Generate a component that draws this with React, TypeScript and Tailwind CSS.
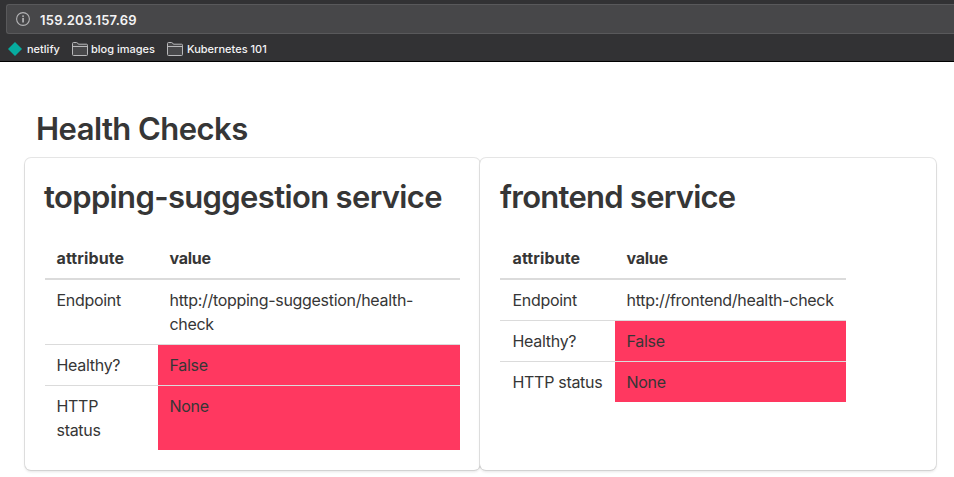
import React from "react";

type Service = {
  name: string;
  cardClass: string;
  titleClass: string;
  tableClass: string;
  firstCol: string;
  cellClass: string;
  rows: { attribute: string; value: string; bad?: boolean; valueClass?: string }[];
};

const services: Service[] = [
  {
    name: "topping-suggestion service",
    cardClass: "w-[455px]",
    titleClass: "tracking-[-0.65px] -ml-px",
    tableClass: "w-[415px]",
    firstCol: "w-[113px]",
    cellClass: "pl-[11.5px] pr-4",
    rows: [
      { attribute: "Endpoint", value: "http://topping-suggestion/health-check" },
      { attribute: "Healthy?", value: "False", bad: true },
      { attribute: "HTTP status", value: "None", bad: true },
    ],
  },
  {
    name: "frontend service",
    cardClass: "w-[456px]",
    titleClass: "tracking-[-0.75px]",
    tableClass: "w-[346px]",
    firstCol: "w-[115px]",
    cellClass: "pl-[12.5px] pr-2",
    rows: [
      { attribute: "Endpoint", value: "http://frontend/health-check", valueClass: "whitespace-nowrap" },
      { attribute: "Healthy?", value: "False", bad: true },
      { attribute: "HTTP status", value: "None", bad: true },
    ],
  },
];

function InfoIcon() {
  return (
    <svg width="14" height="14" viewBox="0 0 14 14" fill="none" className="shrink-0">
      <circle cx="7" cy="7" r="6.4" stroke="#b4b4b6" strokeWidth="1.1" />
      <rect x="6.3" y="3.4" width="1.5" height="1.5" fill="#c4c4c6" />
      <rect x="6.3" y="5.9" width="1.5" height="4.6" fill="#c4c4c6" />
    </svg>
  );
}

function FolderIcon() {
  return (
    <svg width="16" height="14" viewBox="0 0 16 14" fill="none" className="shrink-0">
      <path
        d="M0.5 12.6V1.5Q0.5 0.5 1.5 0.5H4.6Q5.3 0.5 5.6 1L6.4 2.2H14.5Q15.5 2.2 15.5 3.2V12.6Q15.5 13.5 14.5 13.5H1.5Q0.5 13.5 0.5 12.6Z"
        fill="#48484a"
        stroke="#b8b8ba"
      />
      <path d="M0.5 4.5H15.5" stroke="#b8b8ba" />
    </svg>
  );
}

function BrowserBar() {
  return (
    <header className="h-[62px] border-b border-black bg-[#323234] pt-1 text-[#f4f4f5]">
      <div className="ml-1.5 flex h-[30px] items-center rounded-l-[3px] border border-r-0 border-[#59595b] bg-[#474749] pl-[9px]">
        <InfoIcon />
        <span className="ml-2.5 pt-0.5 text-[13px] leading-5 font-semibold tracking-[0.25px]">159.203.157.69</span>
      </div>
      <nav className="flex h-[27px] items-center pt-[3px] pl-2 text-[11px] leading-none font-medium">
        <svg width="14" height="14" viewBox="0 0 14 14" className="shrink-0">
          <path d="M7 0L14 7L7 14L0 7Z" fill="#06ac9f" />
        </svg>
        <span className="ml-[5px] w-[45px] whitespace-nowrap">netlify</span>
        <FolderIcon />
        <span className="ml-[3px] w-[76px] whitespace-nowrap">blog images</span>
        <FolderIcon />
        <span className="ml-[4px] whitespace-nowrap">Kubernetes 101</span>
      </nav>
    </header>
  );
}

function ServiceCard({ service }: { service: Service }) {
  return (
    <section
      className={`h-[312px] shrink-0 rounded-[6px] bg-white p-5 shadow-[0_2px_3px_rgba(10,10,10,0.1),0_0_0_1px_rgba(10,10,10,0.1)] ${service.cardClass}`}
    >
      <h2 className={`mb-[23px] pt-px text-[31px] leading-9 font-semibold whitespace-nowrap ${service.titleClass}`}>{service.name}</h2>
      <table className={`table-fixed border-separate border-spacing-0 text-left text-[16px] leading-6 ${service.tableClass}`}>
        <thead>
          <tr>
            <th className={`border-b-2 border-[#dbdbdb] py-2 font-bold tracking-[0.12px] ${service.cellClass} ${service.firstCol}`}>attribute</th>
            <th className="border-b-2 border-[#dbdbdb] px-[11.5px] py-2 font-bold tracking-[-0.25px]">value</th>
          </tr>
        </thead>
        <tbody className="[&>tr:last-child>td]:border-b-0">
          {service.rows.map((row) => (
            <tr key={row.attribute} className="align-top tracking-[-0.3px]">
              <td className={`border-b border-[#dbdbdb] py-2 ${service.cellClass}`}>{row.attribute}</td>
              <td className={`border-b border-[#dbdbdb] px-[11.5px] py-2 ${row.bad ? "bg-[#ff3860]" : ""} ${row.valueClass ?? ""}`}>
                {row.value}
              </td>
            </tr>
          ))}
        </tbody>
      </table>
    </section>
  );
}

export default function App() {
  return (
    <div className="h-[477px] overflow-hidden bg-white font-['Inter',sans-serif] text-[#363636]">
      <BrowserBar />
      <main className="pt-[49px] pl-[25px]">
        <h1 className="mb-[11px] ml-[11px] text-[31px] leading-9 font-semibold tracking-[-0.55px]">Health Checks</h1>
        <div className="flex">
          {services.map((service) => (
            <ServiceCard key={service.name} service={service} />
          ))}
        </div>
      </main>
    </div>
  );
}
